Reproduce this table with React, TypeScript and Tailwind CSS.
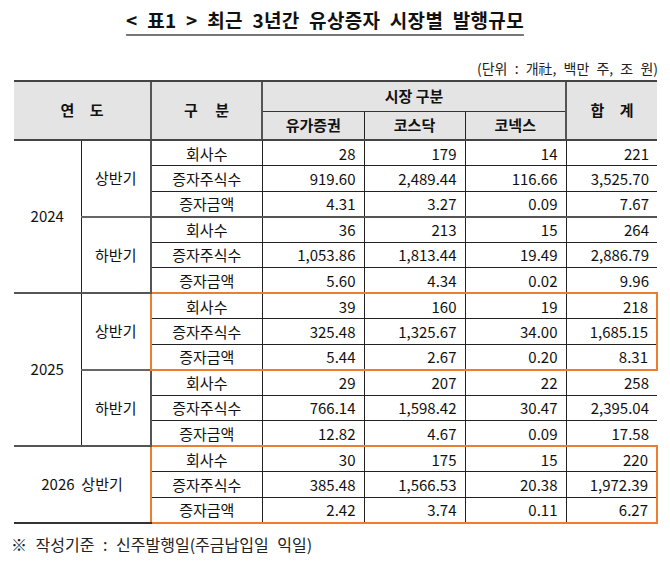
type Row = { label: string; values: string[] };

type Half = {
  year: string;
  half: string;
  highlight?: boolean;
  merged?: boolean;
  rows: Row[];
};

const LABELS = ['회사수', '증자주식수', '증자금액'];

function make(values: string[][]): Row[] {
  return LABELS.map((label, i) => ({ label, values: values[i] }));
}

const HALVES: Half[] = [
  {
    year: '2024',
    half: '상반기',
    rows: make([
      ['28', '179', '14', '221'],
      ['919.60', '2,489.44', '116.66', '3,525.70'],
      ['4.31', '3.27', '0.09', '7.67'],
    ]),
  },
  {
    year: '2024',
    half: '하반기',
    rows: make([
      ['36', '213', '15', '264'],
      ['1,053.86', '1,813.44', '19.49', '2,886.79'],
      ['5.60', '4.34', '0.02', '9.96'],
    ]),
  },
  {
    year: '2025',
    half: '상반기',
    highlight: true,
    rows: make([
      ['39', '160', '19', '218'],
      ['325.48', '1,325.67', '34.00', '1,685.15'],
      ['5.44', '2.67', '0.20', '8.31'],
    ]),
  },
  {
    year: '2025',
    half: '하반기',
    rows: make([
      ['29', '207', '22', '258'],
      ['766.14', '1,598.42', '30.47', '2,395.04'],
      ['12.82', '4.67', '0.09', '17.58'],
    ]),
  },
  {
    year: '2026',
    half: '상반기',
    highlight: true,
    merged: true,
    rows: make([
      ['30', '175', '15', '220'],
      ['385.48', '1,566.53', '20.38', '1,972.39'],
      ['2.42', '3.74', '0.11', '6.27'],
    ]),
  },
];

const FONT = { fontFamily: '"Noto Sans CJK KR", "Noto Sans", sans-serif' };

export default function App() {
  return (
    <div className="w-[670px] h-[562px] bg-white text-[#111] pt-[6px]" style={FONT}>
      {/* Title */}
      <div className="flex justify-center pr-[20px]">
        <h1 className="text-[19px] font-bold tracking-[0.3px] [word-spacing:5px] underline decoration-[#777] decoration-2 underline-offset-[6px] leading-[28px]">
          &lt; 표1 &gt; 최근 3년간 유상증자 시장별 발행규모
        </h1>
      </div>

      {/* Unit */}
      <div className="flex justify-end pr-[12px] mt-[24px] text-[14px] leading-[20px] text-[#222] [word-spacing:4px]">
        (단위 : 개社, 백만 주, 조 원)
      </div>

      {/* Table */}
      <div className="pl-[14px] mt-[2px]">
        <table className="border-collapse table-fixed w-[643px] text-[15px]">
          <colgroup>
            <col className="w-[67px]" />
            <col className="w-[70px]" />
            <col className="w-[111px]" />
            <col className="w-[102px]" />
            <col className="w-[101px]" />
            <col className="w-[101px]" />
            <col className="w-[91px]" />
          </colgroup>
          <thead className="bg-[#e4e4e4] font-bold text-[15px]">
            <tr className="h-[30px]">
              <th colSpan={2} rowSpan={2} className="border-t-2 border-t-[#444] border-b-2 border-b-[#444] font-bold tracking-[6px] pl-[6px]">
                연 도
              </th>
              <th rowSpan={2} className="border-t-2 border-t-[#444] border-b-2 border-b-[#444] border-l-2 border-l-[#555] font-bold tracking-[7px] pl-[7px]">
                구 분
              </th>
              <th colSpan={3} className="border-t-2 border-t-[#444] border-l-2 border-l-[#555] border-b border-b-[#333] font-bold">
                시장 구분
              </th>
              <th rowSpan={2} className="border-t-2 border-t-[#444] border-b-2 border-b-[#444] border-l-2 border-l-[#555] font-bold tracking-[6px] pl-[6px]">
                합 계
              </th>
            </tr>
            <tr className="h-[29px]">
              <th className="border-l-2 border-l-[#555] border-b-2 border-b-[#444] font-bold">유가증권</th>
              <th className="border-l border-l-[#222] border-b-2 border-b-[#444] font-bold">코스닥</th>
              <th className="border-l border-l-[#222] border-b-2 border-b-[#444] font-bold">코넥스</th>
            </tr>
          </thead>
          <tbody>
            {HALVES.map((h, hi) => {
              const firstOfYear = hi === 0 || HALVES[hi - 1].year !== h.year;
              const yearSpan = HALVES.filter((x) => x.year === h.year).length * 3;
              const isLast = hi === HALVES.length - 1;
              return h.rows.map((r, ri) => {
                const first = ri === 0;
                const last = ri === h.rows.length - 1;
                // top border of the cells in this row
                const topCls = first
                  ? h.highlight
                    ? 'border-t-2 border-t-[#ed7d31]'
                    : 'border-t-2 border-t-[#555]'
                  : 'border-t border-t-[#222]';
                const bottomCls =
                  last && h.highlight
                    ? 'border-b-2 border-b-[#ed7d31]'
                    : last && isLast
                    ? 'border-b-2 border-b-[#333]'
                    : '';
                const leftLabel = h.highlight ? 'border-l-2 border-l-[#ed7d31]' : 'border-l-2 border-l-[#555]';
                return (
                  <tr key={`${hi}-${ri}`} className="h-[25.5px]">
                    {first && h.merged && (
                      <td colSpan={2} rowSpan={3} className="border-t-2 border-t-[#555] border-b-2 border-b-[#333] text-center">
                        {h.year}&nbsp;&nbsp;{h.half}
                      </td>
                    )}
                    {first && !h.merged && firstOfYear && (
                      <td rowSpan={yearSpan} className="border-t-2 border-t-[#555] text-center">
                        {h.year}
                      </td>
                    )}
                    {first && !h.merged && (
                      <td rowSpan={3} className={`${firstOfYear ? 'border-t-2 border-t-[#555]' : 'border-t-2 border-t-[#666]'} border-l border-l-[#222] text-center`}>
                        {h.half}
                      </td>
                    )}
                    <td className={`${topCls} ${bottomCls} ${leftLabel} text-center leading-none`}>
                      {r.label}
                    </td>
                    {r.values.map((v, vi) => (
                      <td
                        key={vi}
                        className={`${topCls} ${bottomCls} border-l border-l-[#222] text-right pr-[8px] leading-none ${
                          vi === 3 && h.highlight ? 'border-r-2 border-r-[#ed7d31]' : ''
                        }`}
                      >
                        {v}
                      </td>
                    ))}
                  </tr>
                );
              });
            })}
          </tbody>
        </table>
      </div>

      {/* Footnote */}
      <p className="pl-[11px] mt-[9px] text-[16px] leading-[22px] text-[#222] [word-spacing:5px]">
        ※ 작성기준 : 신주발행일(주금납입일 익일)
      </p>
    </div>
  );
}
